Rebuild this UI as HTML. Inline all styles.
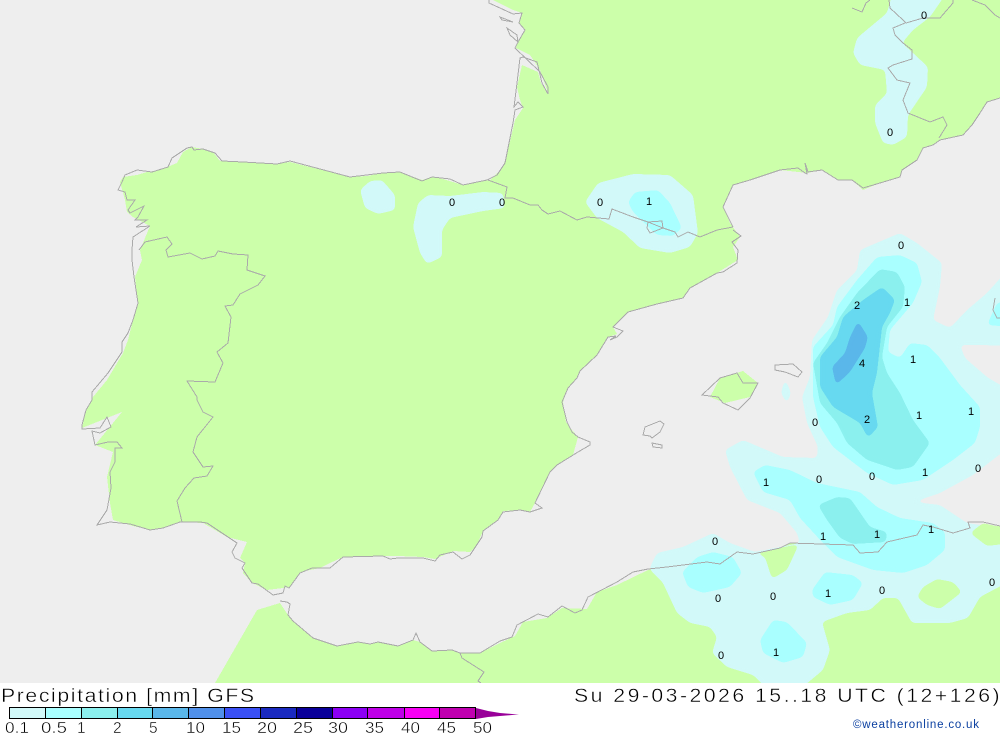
<!DOCTYPE html>
<html><head><meta charset="utf-8"><style>
html,body{margin:0;padding:0;background:#fff;width:1000px;height:733px;overflow:hidden}
svg{display:block}
text{font-family:"Liberation Sans",sans-serif}
.t{fill:#000;stroke:#fff;stroke-width:.4}
</style></head><body>
<svg width="1000" height="733" viewBox="0 0 1000 733" xmlns="http://www.w3.org/2000/svg">
<defs>
<filter id="sm" filterUnits="userSpaceOnUse" x="-20" y="-20" width="1060" height="740" color-interpolation-filters="sRGB">
<feGaussianBlur stdDeviation="2.4"/>
<feComponentTransfer><feFuncA type="linear" slope="30" intercept="-14.5"/></feComponentTransfer>
</filter>
</defs>
<rect width="1000" height="733" fill="#fff"/>
<rect width="1000" height="683" fill="#eeeeee"/>
<g shape-rendering="crispEdges">
<g fill="#ccffaa">
<path d="M493,0L513,10 522,13 519,23 525,30 518,42 516,48 530,55 540,70 548,93 541,83 538,72 522,65 517,87 520,100 523,108 515,120 508,150 503,167 490,180 473,183 463,185 453,182 443,179 432,177 422,180 400,172 383,173 367,176 350,177 290,162 277,164 243,162 220,161 213,152 203,149 192,147 183,152 177,163 160,170 147,172 137,175 123,177 120,182 125,200 127,212 133,217 150,226 140,250 142,260 135,277 138,303 133,320 128,340 123,353 107,380 93,397 86,410 82,428 122,412 95,445 113,452 107,477 110,503 113,520 133,526 150,530 163,528 180,522 203,523 227,537 247,542 240,558 245,563 243,573 252,583 267,590 283,588 290,587 300,572 320,568 330,563 343,557 398,556 423,557 435,559 453,551 470,552 477,545 483,531 498,520 503,511 522,510 530,512 535,503 550,472 557,465 573,455 578,437 572,430 566,422 563,402 568,388 577,378 580,371 597,355 608,337 617,334 613,327 628,312 657,304 683,298 690,288 717,273 738,260 733,247 740,237 733,227 730,223 723,207 733,185 750,180 780,170 807,173 823,170 838,180 852,180 863,190 880,183 900,177 902,170 917,160 923,148 933,145 940,140 963,135 972,125 980,113 987,102 1000,98 1000,0Z"/>
<path d="M215,683L257,610 280,603 288,615 293,621 313,638 337,646 358,642 370,644 378,642 398,646 413,640 420,642 432,651 452,650 460,653 480,653 500,643 515,636 523,622 547,618 562,608 587,609 597,592 617,585 648,570 667,567 707,562 720,564 737,552 753,554 780,548 790,543 853,545 860,553 878,552 887,542 917,535 923,525 933,527 953,533 970,528 1000,526 1000,683Z"/>
<path d="M710,397L720,378 743,371 758,383 750,397 725,403Z"/>
</g>
<g fill="#d2f9f9" filter="url(#sm)">
<path d="M360,190L370,181 382,180 395,195 395,210 378,214 365,208Z"/>
<path d="M418,203L428,195 450,196 483,192 503,193 505,208 483,211 450,218 442,230 442,257 427,264 420,253 413,227Z"/>
<path d="M585,202L598,183 633,174 670,175 693,195 698,233 690,247 670,253 640,248 623,232 597,218Z"/>
<path d="M894,-12L887,13 857,38 853,53 860,65 885,70 887,93 875,105 875,123 883,143 893,145 907,137 908,115 927,87 928,67 913,53 902,43 913,30 930,17 950,-12Z"/>
<path d="M900,233L917,243 942,263 940,287 933,320 950,328 967,310 987,293 1012,265 1012,346 980,345 960,345 965,358 987,377 1012,392 1012,445 973,475 940,493 913,502 940,505 967,523 1012,530 1012,580 980,597 968,618 950,623 912,623 898,598 883,598 870,610 847,613 822,622 830,650 823,670 793,695 773,695 753,675 727,667 712,653 717,637 710,627 690,623 677,613 663,583 650,570 650,567 657,553 683,547 713,533 730,543 755,552 800,543 797,533 780,513 747,500 730,467 725,450 743,440 783,457 817,458 818,447 807,423 802,397 810,377 812,340 828,317 837,290 857,270 860,250Z"/>
<path d="M785,378L791,393 787,404 781,393Z"/>
</g>
<g fill="#ccffaa" filter="url(#sm)">
<path d="M755,553L799,544 787,570 772,579 765,557Z"/>
<path d="M970,533L983,523 1012,530 1012,543 987,546Z"/>
<path d="M917,597L923,587 937,579 953,582 962,592 940,609 927,605Z"/>
</g>
<g fill="#a9ffff" filter="url(#sm)">
<path d="M628,202L635,192 658,190 670,203 682,228 673,236 657,235 633,212Z"/>
<path d="M877,257L900,255 917,263 922,282 913,303 890,330 888,352 900,358 910,343 927,345 940,358 960,385 980,407 980,427 975,443 953,460 923,480 893,485 867,473 833,447 820,427 813,397 813,347 833,325 837,307 857,280Z"/>
<path d="M753,472L765,465 790,470 817,483 860,492 877,507 900,518 933,523 945,532 945,550 927,565 903,573 873,570 837,557 823,543 800,518 790,500 763,492Z"/>
<path d="M682,572L697,557 713,552 733,557 742,573 730,587 703,593 688,587Z"/>
<path d="M812,590L825,572 853,575 863,583 853,600 830,605 813,597Z"/>
<path d="M760,640L773,620 787,622 807,643 803,657 783,663 763,653Z"/>
<path d="M987,325L997,303 1012,300 1012,327Z"/>
</g>
<g fill="#8bf0ee" filter="url(#sm)">
<path d="M880,269L897,272 905,287 903,307 887,327 882,357 887,373 900,393 913,420 930,443 913,467 897,470 867,460 847,443 837,423 820,403 813,363 827,343 840,317 857,293Z"/>
<path d="M818,505L837,497 850,498 870,527 887,532 886,542 853,544 840,538 827,520Z"/>
</g>
<path fill="#67d9f0" filter="url(#sm)" d="M882,287L895,300 890,313 882,327 877,373 872,393 878,427 868,438 860,423 833,407 820,387 820,357 837,337 843,317 863,300Z"/>
<path fill="#5ab7ea" filter="url(#sm)" d="M858,321L868,337 865,348 850,372 836,385 832,367 845,353 850,337Z"/>
<g fill="none" stroke="#aaaaaa" stroke-width="1">
<path d="M290,161L277,164 243,162 222,161 215,153 203,149 194,150 192,147 187,148 172,158 168,167 152,172 137,170 125,175 122,182 118,190 125,192 127,200 135,200 128,210 130,213 144,206 138,217 135,220 147,220 136,227 150,226 133,237 132,250 132,260 134,277 138,303 133,320 128,333 122,342 122,352 108,373 92,392 92,400 86,410 82,425 82,429 100,428 107,417 111,427 100,433 92,431 95,445 108,442 117,442 122,448 115,448 115,462 110,472 111,488 107,510 97,525 110,522 130,524 150,530 163,528 180,522 200,522 207,523 237,543 232,552 235,558 245,563 242,568 252,583 258,584 273,595 283,593 285,586 289,588 300,573 312,568 330,568 343,557 383,556 390,559 398,558 423,558 435,561 440,555 453,552 462,559 470,555 482,537 483,531 498,520 503,512 520,510 530,512 542,508 535,503 550,472 557,465 578,452 590,445 590,442 578,437 572,432 567,422 562,402 568,388 577,378 580,371 597,355 608,337 616,336 610,340 617,337 623,331 613,327 628,312 657,304 683,298 690,288 717,273 723,272 737,263 738,250 732,242 741,236 733,230"/>
<path d="M290,161L350,177 383,173 400,172 422,181 432,177 450,179 463,185 487,180 497,175 505,163 513,123 515,110 523,107 518,102 514,107 517,83 520,58 523,57 537,62 542,83 548,94 548,87 540,72 515,48 518,42 525,30 519,23 522,13 513,14 489,3 489,0"/>
<path d="M500,17L513,22 502,20Z M507,28L517,35 518,42 510,35Z"/>
<path d="M488,180L507,187 505,198 513,198 530,205 538,205 542,210 548,214 560,211 577,220 587,217 609,219 612,209 633,217 648,222 663,228 675,232 678,237 688,232 700,237 717,230 733,227M648,222L662,221 663,228 650,233 647,228Z"/>
<path d="M733,227L723,207 733,185 750,180 780,170 798,168 805,173 807,174 805,163 808,172 822,170 838,180 852,180 863,188 880,183 900,177 902,170 917,160 923,148 933,145 940,140 963,135 972,125 980,113 987,102 1000,98"/>
<path d="M889,0L890,8 903,20 906,23 923,18 940,18 953,3 953,0M905,23L893,28 895,35 903,43 912,50 912,59 893,65 888,68 897,80 910,83 903,100 908,113 930,122 943,117 947,125 939,138"/>
<path d="M852,8L862,12 866,3 870,0M972,0L985,5 995,15 1000,18"/>
<path d="M139,250L145,242 167,237 172,244 166,250 168,257 190,253 202,259 215,256 218,251 233,254 248,255 247,270 265,276 258,285 240,294 233,305 225,306 231,317 228,343 217,352 223,363 215,382 187,381 197,397 197,400 203,412 213,417 197,437 193,452 203,467 213,466 207,476 194,478 185,488 177,501 182,522"/>
<path d="M280,601L287,602 290,604 288,615 293,621 313,638 337,646 358,642 370,644 378,642 398,646 413,640 416,633 420,642 432,651 452,650 460,653 480,653 500,641 512,637 517,625 538,614 548,617 562,606 575,613 582,610 588,597 617,582 633,572 648,569 667,567 707,562 720,564 737,552 753,554 780,548 790,543 853,545 860,553 878,552 887,542 917,535 923,525 933,527 953,533 970,528 968,522 983,522 1000,526"/>
<path d="M460,653L462,658 484,672 478,681 481,683"/>
<path d="M702,395L720,378 737,373 743,383 758,383 750,398 738,410 723,403 718,397Z"/>
<path d="M775,365L793,364 802,372 798,377 785,372 775,370Z"/>
<path d="M643,435L645,427 660,421 664,424 660,432 652,438 650,436Z M652,443L662,445 662,448 653,447Z"/>
<path d="M995,298L993,310 997,318 1000,318"/>
</g>
</g>
<rect x="0" y="683" width="1000" height="50" fill="#fff"/>
<g font-size="11" fill="#000" text-anchor="middle">
<text x="924" y="19">0</text><text x="890" y="136">0</text><text x="452" y="206">0</text><text x="502" y="206">0</text><text x="600" y="206">0</text><text x="649" y="205">1</text>
<text x="901" y="249">0</text><text x="857" y="309">2</text><text x="907" y="306">1</text><text x="913" y="363">1</text><text x="862" y="367">4</text><text x="919" y="419">1</text><text x="971" y="415">1</text><text x="867" y="423">2</text><text x="815" y="426">0</text>
<text x="766" y="486">1</text><text x="819" y="483">0</text><text x="872" y="480">0</text><text x="925" y="476">1</text><text x="978" y="472">0</text><text x="823" y="540">1</text><text x="877" y="538">1</text><text x="931" y="533">1</text>
<text x="715" y="545">0</text><text x="718" y="602">0</text><text x="773" y="600">0</text><text x="828" y="597">1</text><text x="882" y="594">0</text><text x="992" y="586">0</text><text x="721" y="659">0</text><text x="776" y="656">1</text>
</g>
<text class="t" transform="translate(1,702) scale(1.12,1)" font-size="19" textLength="226" lengthAdjust="spacing">Precipitation [mm] GFS</text>
<text class="t" transform="translate(574,702) scale(1.12,1)" font-size="19" textLength="380" lengthAdjust="spacing">Su 29-03-2026 15..18 UTC (12+126)</text>
<g shape-rendering="crispEdges" stroke="#000" stroke-width="1">
<rect x="9.5" y="707.5" width="36" height="11" fill="#d2f9f9"/>
<rect x="45.5" y="707.5" width="36" height="11" fill="#a9ffff"/>
<rect x="81.5" y="707.5" width="36" height="11" fill="#8bf0ee"/>
<rect x="117.5" y="707.5" width="35" height="11" fill="#67d9f0"/>
<rect x="152.5" y="707.5" width="36" height="11" fill="#5ab7ea"/>
<rect x="188.5" y="707.5" width="36" height="11" fill="#5090ea"/>
<rect x="224.5" y="707.5" width="36" height="11" fill="#3a50f5"/>
<rect x="260.5" y="707.5" width="36" height="11" fill="#1a2ac0"/>
<rect x="296.5" y="707.5" width="36" height="11" fill="#0a009a"/>
<rect x="332.5" y="707.5" width="35" height="11" fill="#8c00f5"/>
<rect x="367.5" y="707.5" width="37" height="11" fill="#bf00e8"/>
<rect x="404.5" y="707.5" width="35" height="11" fill="#f800f5"/>
<rect x="439.5" y="707.5" width="36" height="11" fill="#c000b0"/>
</g>
<path d="M476,708L488,711 500,713 512,714 519,714.5 512,715 500,716 488,717 476,719Z" fill="#990099"/>
<g font-size="15.5" class="t">
<text x="5" y="733" textLength="24" lengthAdjust="spacingAndGlyphs">0.1</text><text x="41" y="733" textLength="26" lengthAdjust="spacingAndGlyphs">0.5</text><text x="77" y="733">1</text><text x="113" y="733">2</text><text x="149" y="733">5</text><text x="186" y="733" textLength="19" lengthAdjust="spacingAndGlyphs">10</text><text x="222" y="733" textLength="19" lengthAdjust="spacingAndGlyphs">15</text><text x="257" y="733" textLength="20" lengthAdjust="spacingAndGlyphs">20</text><text x="293" y="733" textLength="20" lengthAdjust="spacingAndGlyphs">25</text><text x="328" y="733" textLength="20" lengthAdjust="spacingAndGlyphs">30</text><text x="365" y="733" textLength="19" lengthAdjust="spacingAndGlyphs">35</text><text x="401" y="733" textLength="19" lengthAdjust="spacingAndGlyphs">40</text><text x="437" y="733" textLength="19" lengthAdjust="spacingAndGlyphs">45</text><text x="473" y="733" textLength="19" lengthAdjust="spacingAndGlyphs">50</text>
</g>
<text x="853" y="728" font-size="11.5" fill="#0a3fa0" textLength="126">©weatheronline.co.uk</text>
</svg>
</body></html>
